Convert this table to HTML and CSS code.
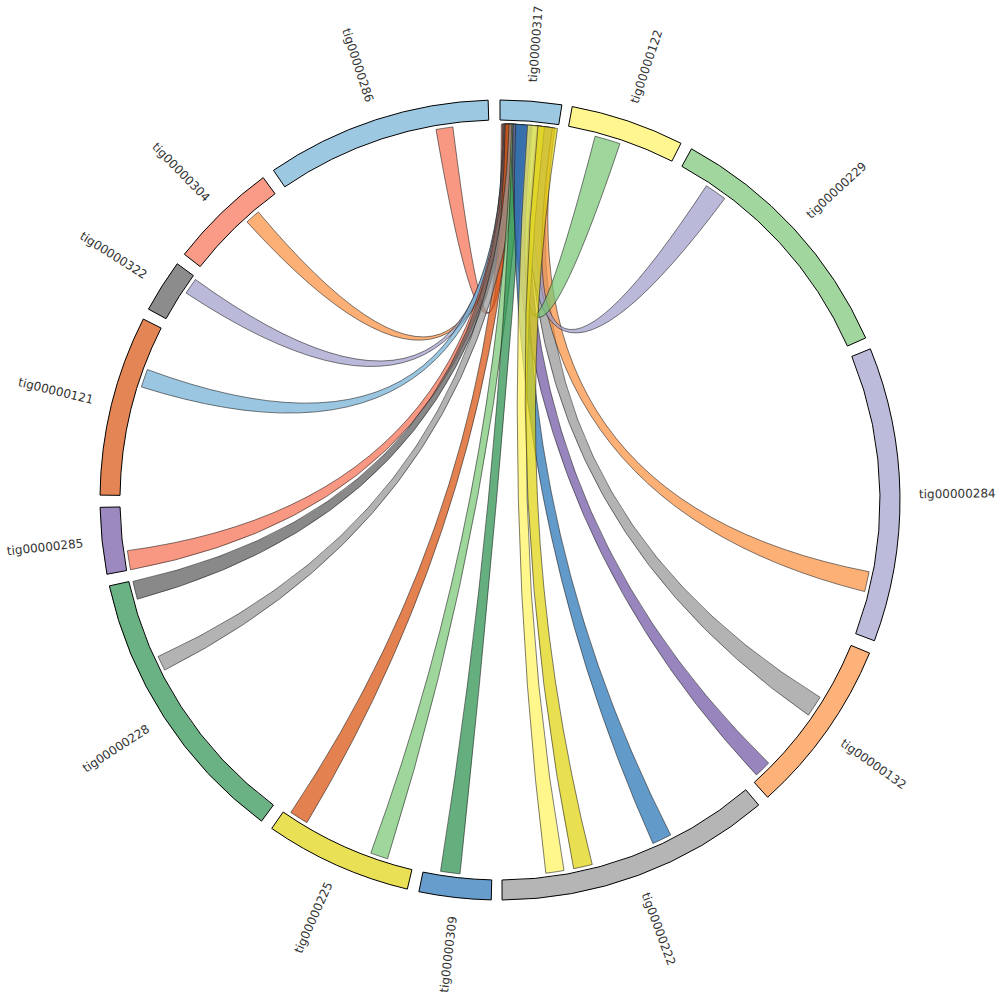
FILE: index.html
```html
<!DOCTYPE html>
<html lang="en">
<head>
<meta charset="utf-8">
<title>Contig chord diagram</title>
<link rel="stylesheet" href="styles.css">
</head>
<body>
<div class="canvas">
<svg id="chart" class="chart" width="1000" height="1000" viewBox="0 0 1000 1000" xmlns="http://www.w3.org/2000/svg">
  <g id="chords"></g>
  <g id="segments"></g>
  <g id="labels">
    <text class="label" data-a="4.45">tig00000317</text>
    <text class="label" data-a="18.65">tig00000122</text>
    <text class="label" data-a="47.35">tig00000229</text>
    <text class="label" data-a="89.2">tig00000284</text>
    <text class="label" data-a="125.25">tig00000132</text>
    <text class="label" data-a="159.7">tig00000222</text>
    <text class="label" data-a="186.5">tig00000309</text>
    <text class="label" data-a="204.1">tig00000225</text>
    <text class="label" data-a="237.1">tig00000228</text>
    <text class="label" data-a="264.1">tig00000285</text>
    <text class="label" data-a="283.8">tig00000121</text>
    <text class="label" data-a="302.35">tig00000322</text>
    <text class="label" data-a="315.8">tig00000304</text>
    <text class="label" data-a="341.9">tig00000286</text>
  </g>
</svg>
</div>
<script src="script.js"></script>
</body>
</html>
```
FILE: styles.css
```css
html, body {
  margin: 0;
  padding: 0;
  background: #ffffff;
}
.canvas {
  width: 1000px;
  height: 1000px;
}
.chart {
  display: block;
}
.seg {
  stroke: #000000;
  stroke-width: 1;
}
.chord {
  fill-opacity: 0.72;
  stroke: #1a1a1a;
  stroke-opacity: 0.8;
  stroke-width: 0.7;
}
.label {
  font-family: "DejaVu Sans", Verdana, sans-serif;
  font-size: 12px;
  fill: #333333;
}
```
FILE: script.js
```js
(function () {
  var C = 500, RO = 400, RI = 380, RC = 376, RL = 419;
  var NS = 'http://www.w3.org/2000/svg';
  function P(t, r) {
    var a = t * Math.PI / 180;
    return [C + r * Math.sin(a), C - r * Math.cos(a)];
  }
  function f(p) { return p[0].toFixed(2) + ' ' + p[1].toFixed(2); }

  var segs = [
    [0, 8.9, '#9DC8E2'],
    [10.4, 26.9, '#FFF68F'],
    [28.6, 66.1, '#A1D79F'],
    [67.8, 110.6, '#BDBBDB'],
    [112.5, 138, '#FDB27A'],
    [139.7, 179.7, '#B5B5B5'],
    [181.25, 191.7, '#679DCC'],
    [193.4, 214.8, '#E9E056'],
    [216.6, 257.6, '#6AB183'],
    [259.3, 268.95, '#9B89BF'],
    [270.7, 296.9, '#E48555'],
    [298.5, 306.2, '#8C8C8C'],
    [307.9, 323.7, '#F99B86'],
    [325.5, 358.3, '#9DC8E2']
  ];

  // [s0, s1, t0, t1, base colour]
  var chords = [
    [0.2, 1.8, 350.2, 352.8, '#F67052'],
    [0.4, 2.0, 317.7, 320.0, '#FC9141'],
    [0.5, 2.0, 303.4, 305.9, '#A19ECC'],
    [0.6, 2.1, 287.5, 290.3, '#73B0D6'],
    [0.7, 2.3, 259.3, 262.25, '#F67052'],
    [0.9, 2.6, 254.7, 257.5, '#5B5B5B'],
    [0.8, 2.4, 210.9, 213.8, '#D8510C'],
    [1.4, 3.2, 243.1, 245.4, '#959595'],
    [1.8, 3.6, 197.4, 200.1, '#79C676'],
    [2.0, 4.0, 186.1, 189.1, '#2A904E'],
    [4.8, 8.0, 121.65, 124.9, '#959595'],
    [5.4, 8.4, 101.0, 104.1, '#FC9141'],
    [5.0, 8.0, 33.3, 36.7, '#A19ECC'],
    [2.0, 4.9, 134.4, 137.0, '#7056A4'],
    [2.4, 5.0, 153.0, 156.0, '#2673B6'],
    [4.8, 5.7, 14.65, 18.6, '#79C676'],
    [4.2, 6.8, 170.2, 173.0, '#FFF25F'],
    [5.8, 8.8, 165.8, 168.7, '#DFD20E']
  ];

  var gC = document.getElementById('chords');
  chords.forEach(function (c) {
    var s0 = P(c[0], RC), s1 = P(c[1], RC), t0 = P(c[2], RC), t1 = P(c[3], RC);
    var ls = (c[1] - c[0]) > 180 ? 1 : 0, lt = (c[3] - c[2]) > 180 ? 1 : 0;
    var d = 'M' + f(s0) + ' A' + RC + ' ' + RC + ' 0 ' + ls + ' 1 ' + f(s1) +
      ' Q' + C + ' ' + C + ' ' + f(t0) +
      ' A' + RC + ' ' + RC + ' 0 ' + lt + ' 1 ' + f(t1) +
      ' Q' + C + ' ' + C + ' ' + f(s0) + ' Z';
    var p = document.createElementNS(NS, 'path');
    p.setAttribute('d', d);
    p.setAttribute('class', 'chord');
    p.setAttribute('fill', c[4]);
    gC.appendChild(p);
  });

  var gS = document.getElementById('segments');
  segs.forEach(function (s) {
    var l = (s[1] - s[0]) > 180 ? 1 : 0;
    var d = 'M' + f(P(s[0], RO)) + ' A' + RO + ' ' + RO + ' 0 ' + l + ' 1 ' + f(P(s[1], RO)) +
      ' L' + f(P(s[1], RI)) + ' A' + RI + ' ' + RI + ' 0 ' + l + ' 0 ' + f(P(s[0], RI)) + ' Z';
    var p = document.createElementNS(NS, 'path');
    p.setAttribute('d', d);
    p.setAttribute('class', 'seg');
    p.setAttribute('fill', s[2]);
    gS.appendChild(p);
  });

  var labels = document.querySelectorAll('#labels .label');
  Array.prototype.forEach.call(labels, function (t) {
    var a = parseFloat(t.getAttribute('data-a'));
    var tr = 'translate(' + C + ',' + C + ') rotate(' + (a - 90).toFixed(2) + ') translate(' + RL + ',0)';
    if (a > 180) {
      tr += ' rotate(180)';
      t.setAttribute('text-anchor', 'end');
    } else {
      t.setAttribute('text-anchor', 'start');
    }
    t.setAttribute('dy', '0.35em');
    t.setAttribute('transform', tr);
  });
})();
```
